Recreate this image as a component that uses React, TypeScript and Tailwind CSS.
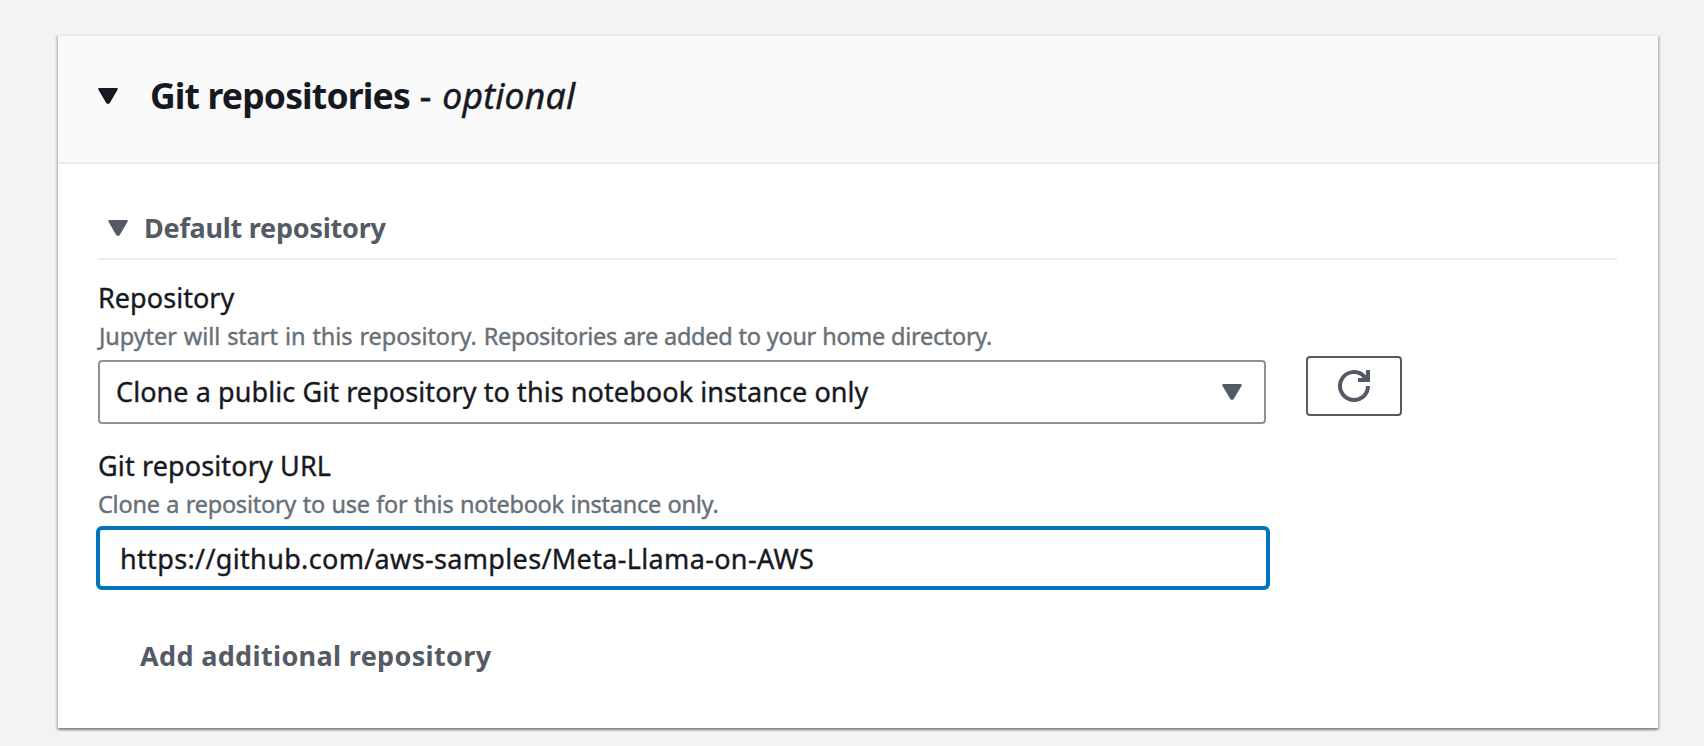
import type { ReactNode } from "react";

function Caret({ className }: { className: string }) {
  return (
    <svg viewBox="0 0 20 16" preserveAspectRatio="none" className={className} fill="currentColor" stroke="currentColor" strokeWidth="2" strokeLinejoin="round">
      <path d="M1.2 1H18.8L10.8 14.8H9.2Z" />
    </svg>
  );
}

function RefreshIcon() {
  return (
    <svg viewBox="0 0 16 16" className="h-8 w-8" fill="none" stroke="currentColor" strokeWidth="2">
      <path d="M15 8a7 7 0 1 1-2.05-4.95L14.6 4.9" />
      <path d="M15 0v5H10" />
      <path d="M11.6 4.6L14.4 4.6L14.4 2.6Z" fill="currentColor" strokeWidth="0.8" />
    </svg>
  );
}

function Label({ className, children }: { className: string; children: ReactNode }) {
  return (
    <div className={`text-[27px] leading-8 text-[#16191f] [-webkit-text-stroke:0.35px_#16191f] ${className}`}>
      {children}
    </div>
  );
}

function Hint({ className, children }: { className: string; children: ReactNode }) {
  return (
    <div className={`mt-1.5 text-[23.5px] leading-8 text-[#687078] [-webkit-text-stroke:0.4px_#687078] ${className}`}>
      {children}
    </div>
  );
}

export default function App() {
  return (
    <main className="h-[746px] overflow-hidden bg-[#f2f3f3] pt-[34px] pr-[46px] pl-[58px] font-['Noto_Sans',sans-serif] whitespace-nowrap">
      <section className="h-[694px] border-t-2 border-[#eaeded] bg-white shadow-[0_2px_2px_0_rgba(0,28,36,0.3),2px_2px_2px_0_rgba(0,28,36,0.15),-2px_2px_2px_0_rgba(0,28,36,0.15)]">
        <header className="flex h-32 items-start border-b-2 border-[#eaeded] bg-[#fafafa] pt-[35px] pl-10 text-[#16191f]">
          <Caret className="mt-[17px] h-4 w-5" />
          <h2 className="ml-8 flex text-[35.5px] leading-[48px]">
            <span className="font-bold tracking-[-0.85px]">Git repositories</span>
            <span className="ml-2.5 [-webkit-text-stroke:0.8px_#16191f]">-</span>
            <span className="ml-[11px] italic tracking-[0.2px] [-webkit-text-stroke:0.4px_#16191f]">optional</span>
          </h2>
        </header>

        <div className="pt-12 pr-[41px] pl-10">
          <div className="flex items-start border-b-2 border-[#eaeded] pb-3.5 pl-2.5 text-[#545b64]">
            <Caret className="mt-2 h-4 w-5" />
            <h3 className="ml-4 text-[27px] leading-8 font-bold tracking-[-0.25px]">Default repository</h3>
          </div>

          <Label className="mt-[22px] tracking-[0.05px]">Repository</Label>
          <Hint className="pl-px">
            <span className="tracking-[-0.08px] [word-spacing:1px]">Jupyter will start in this repository. </span>
            <span className="tracking-[-0.31px] [word-spacing:0.4px]">Repositories are added to your home directory.</span>
          </Hint>
          <div className="mt-1 flex items-start gap-10">
            <button className="mt-1 flex h-16 w-[1168px] items-center justify-between rounded border-2 border-[#879596] bg-white pr-[22px] pl-4 text-left text-[#545b64]">
              <span className="text-[27px] leading-8 tracking-[0.08px] text-[#16191f] [-webkit-text-stroke:0.35px_#16191f]">
                Clone a public Git repository to this notebook instance only
              </span>
              <Caret className="h-4 w-5" />
            </button>
            <button aria-label="Refresh" className="flex h-[60px] w-24 items-center justify-center rounded border-2 border-[#545b64] bg-white text-[#545b64]">
              <RefreshIcon />
            </button>
          </div>

          <Label className="mt-[26px] tracking-[0.13px]">Git repository URL</Label>
          <Hint className="tracking-[-0.25px] [word-spacing:0.7px]">Clone a repository to use for this notebook instance only.</Hint>
          <input
            readOnly
            value="https://github.com/aws-samples/Meta-Llama-on-AWS"
            className="mt-1.5 -ml-0.5 block h-16 w-[1174px] rounded-md border-4 border-[#0073bb] bg-white px-5 text-[27px] tracking-[0.34px] text-[#16191f] outline-none [-webkit-text-stroke:0.35px_#16191f]"
          />
          <button className="mt-[50px] ml-[42px] block text-[27px] leading-8 font-bold tracking-[0.34px] text-[#545b64]">
            Add additional repository
          </button>
        </div>
      </section>
    </main>
  );
}
